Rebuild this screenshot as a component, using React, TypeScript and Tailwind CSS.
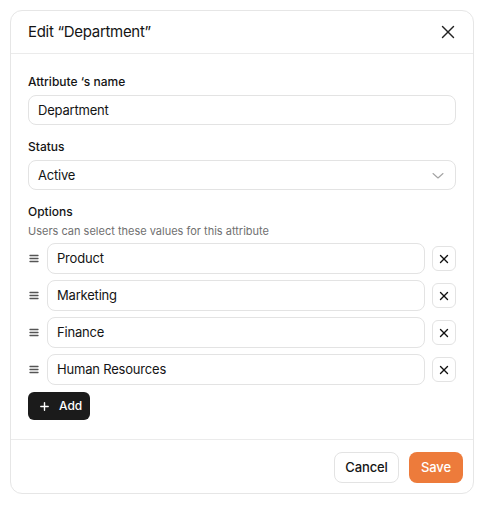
import React from "react";

const font = { fontFamily: "Inter, 'Noto Sans', sans-serif" };

function XIcon({ size, stroke }: { size: number; stroke: number }) {
  return (
    <svg width={size} height={size} viewBox="0 0 24 24" fill="none" stroke="currentColor" strokeWidth={stroke} strokeLinecap="round" strokeLinejoin="round">
      <path d="M18 6 6 18" />
      <path d="m6 6 12 12" />
    </svg>
  );
}

function Grip() {
  return (
    <svg width="10" height="9" viewBox="0 0 10 9" fill="none" stroke="#555" strokeWidth="1.3" strokeLinecap="round">
      <path d="M1 1.5h8" />
      <path d="M1 4.5h8" />
      <path d="M1 7.5h8" />
    </svg>
  );
}

const options = ["Product", "Marketing", "Finance", "Human Resources"];

export default function App() {
  return (
    <div className="min-h-[505px] bg-white pt-[10px] pl-[10px]" style={font}>
      <div className="flex h-[484px] w-[464px] flex-col rounded-xl border border-[#e6e6e6] bg-white text-[#141414]">
        <div className="flex h-[43px] items-center justify-between border-b border-[#ebebeb] pl-[17px] pr-[14px]">
          <div className="text-[15px] leading-5 tracking-[-0.02em]">Edit “Department”</div>
          <div className="text-[#222]">
            <XIcon size={22} stroke={1.5} />
          </div>
        </div>

        <div className="flex flex-1 flex-col px-[17px] pt-[20px]">
          <div className="text-xs font-medium leading-4">Attribute ‘s name</div>
          <div className="mt-[5px] flex h-[30px] items-center rounded-lg border border-[#e3e3e3] pl-[9px] pt-[1px] text-[13px] tracking-[-0.015em]">
            Department
          </div>

          <div className="mt-[14px] text-xs font-medium leading-4">Status</div>
          <div className="mt-[5px] flex h-[30px] items-center justify-between rounded-lg border border-[#e3e3e3] pl-[9px] pr-[11px] pt-[1px] text-[13px] tracking-[-0.015em]">
            <span>Active</span>
            <svg width="12" height="7" viewBox="0 0 12 7" fill="none" stroke="#a3a3a3" strokeWidth="1.1" strokeLinecap="round" strokeLinejoin="round">
              <path d="M1 1.5l5 4.5 5-4.5" />
            </svg>
          </div>

          <div className="mt-[14px] text-xs font-medium leading-4">Options</div>
          <div className="mt-[3px] text-[11px] leading-4 text-[#707070]">Users can select these values for this attribute</div>

          <div className="mt-[4px] flex flex-col gap-[6px]">
            {options.map((o) => (
              <div key={o} className="flex h-[31px] items-center">
                <div className="flex w-[19px] items-center pl-[1px]">
                  <Grip />
                </div>
                <div className="flex h-[31px] flex-1 items-center rounded-lg border border-[#e3e3e3] pl-[9px] pt-[1px] text-[13px] tracking-[-0.015em]">
                  {o}
                </div>
                <div className="ml-[7px] flex h-[25px] w-[24px] items-center justify-center rounded-md border border-[#e3e3e3] text-[#111]">
                  <XIcon size={14} stroke={2.4} />
                </div>
              </div>
            ))}
          </div>

          <div className="mt-[7px] flex h-[28px] w-[62px] items-center gap-[10px] rounded-md bg-[#1b1b1b] pl-[12px] text-[12px] font-medium text-white">
            <svg width="9" height="9" viewBox="0 0 9 9" fill="none" stroke="white" strokeWidth="1.4" strokeLinecap="round">
              <path d="M4.5 0.8v7.4" />
              <path d="M0.8 4.5h7.4" />
            </svg>
            <span>Add</span>
          </div>
        </div>

        <div className="flex items-center justify-end gap-[10px] border-t border-[#ebebeb] pb-[10px] pr-[10px] pt-[12px]">
          <div className="flex h-[31px] w-[65px] items-center justify-center rounded-lg border border-[#e3e3e3] text-[13px] font-medium tracking-[-0.01em]">
            Cancel
          </div>
          <div className="flex h-[31px] w-[54px] items-center justify-center rounded-lg bg-[#ed7b3b] text-[13px] font-medium tracking-[-0.01em] text-white">
            Save
          </div>
        </div>
      </div>
    </div>
  );
}
